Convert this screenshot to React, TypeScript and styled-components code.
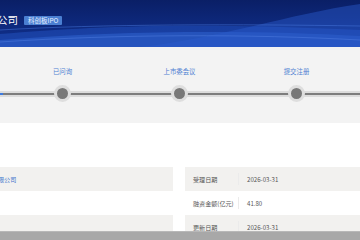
import React from "react";
import styled, { createGlobalStyle } from "styled-components";

const STEP_WIDTH = 117;
const ROW_HEIGHT = 24;

const GlobalStyle = createGlobalStyle`
  html, body {
    margin: 0;
    padding: 0;
    background: #fff;
    overflow: hidden;
  }
  body {
    width: 360px;
    height: 240px;
    font-family: "Noto Sans CJK SC", "Noto Sans", sans-serif;
  }
`;

const Page = styled.div`
  display: flex;
  flex-direction: column;
  width: 360px;
`;

const Header = styled.div`
  position: relative;
  height: 47px;
  overflow: hidden;
  background: linear-gradient(180deg, #0a1f66 0%, #0e2a80 60%, #12338f 100%);
`;

const Waves = styled.svg`
  position: absolute;
  left: 0;
  top: 0;
  width: 360px;
  height: 47px;
`;

const TitleRow = styled.div`
  position: relative;
  display: flex;
  align-items: center;
  gap: 6px;
  padding-top: 13px;
  margin-left: -3px;
`;

const Title = styled.span`
  color: #fff;
  font-size: 10.5px;
  line-height: 14px;
`;

const Badge = styled.span`
  background: #4a7fd2;
  color: #e8f0ff;
  font-size: 6.5px;
  line-height: 9px;
  padding: 0 4px;
  border-radius: 1px;
`;

const Progress = styled.div`
  position: relative;
  height: 76px;
  background: #f3f3f3;
  overflow: hidden;
`;

const Track = styled.div`
  position: absolute;
  left: 0;
  right: 0;
  top: 44px;
  height: 6px;
  background: #dcdcdc;
`;

const TrackLine = styled.div<{ done?: boolean }>`
  position: absolute;
  left: 0;
  top: 2px;
  height: 2px;
  width: ${(p) => (p.done ? "3px" : "100%")};
  background: ${(p) => (p.done ? "#3d7be0" : "#7d7d7d")};
`;

const Steps = styled.div`
  position: relative;
  display: flex;
  margin-left: -113px;
`;

const Step = styled.div`
  flex: 0 0 ${STEP_WIDTH}px;
  display: flex;
  flex-direction: column;
  align-items: center;
`;

const StepLabel = styled.span`
  margin-top: 20px;
  height: 10px;
  font-size: 6.4px;
  line-height: 10px;
  color: #4d80d2;
  white-space: nowrap;
`;

const Dot = styled.span`
  margin-top: 8px;
  width: 11px;
  height: 11px;
  border-radius: 50%;
  background: #787878;
  border: 3px solid #dedede;
`;

const Spacer = styled.div`
  height: 44px;
`;

const Table = styled.div`
  display: flex;
  gap: 12px;
`;

const Column = styled.div<{ width?: number }>`
  display: flex;
  flex-direction: column;
  ${(p) => (p.width ? `flex: 0 0 ${p.width}px;` : "flex: 1;")}
`;

const Row = styled.div<{ shaded: boolean }>`
  display: flex;
  align-items: center;
  height: ${ROW_HEIGHT}px;
  background: ${(p) => (p.shaded ? "#f2f1ef" : "#fff")};
`;

const Label = styled.span`
  flex: 0 0 45px;
  padding-left: 8px;
  font-size: 6.1px;
  color: #555;
  white-space: nowrap;
`;

const Divider = styled.span`
  width: 1px;
  height: 12px;
  background: #ebebeb;
`;

const Value = styled.span<{ link?: boolean }>`
  padding-left: ${(p) => (p.link ? "0" : "8px")};
  margin-left: ${(p) => (p.link ? "-2px" : "0")};
  font-size: 6.1px;
  color: ${(p) => (p.link ? "#3f74cc" : "#555")};
  white-space: nowrap;
`;

const BottomBar = styled.div`
  position: fixed;
  left: 0;
  right: 0;
  bottom: 0;
  height: 8px;
  background: #a8a8a8;
  border-top: 1px solid #b8b8b8;
`;

// first and last steps sit outside the visible strip
const steps = ["", "已问询", "上市委会议", "提交注册", ""];

const leftRows = ["限公司", "", ""];
const rightRows = [
  { label: "受理日期", value: "2026-03-31" },
  { label: "融资金额(亿元)", value: "41.80" },
  { label: "更新日期", value: "2026-03-31" },
];

const App: React.FC = () => {
  return (
    <Page>
      <GlobalStyle />
      <Header>
        <Waves viewBox="0 0 360 47" preserveAspectRatio="none">
          <path
            d="M0 34 C 90 26, 200 22, 360 30 L360 47 L0 47 Z"
            fill="#1f4cb8"
            opacity="0.6"
          />
          <path
            d="M0 40 C 120 30, 260 30, 360 36 L360 47 L0 47 Z"
            fill="#2f62cf"
            opacity="0.55"
          />
          <path
            d="M140 47 C 220 38, 290 14, 360 4 L360 47 Z"
            fill="#2b5ccc"
            opacity="0.45"
          />
          <path
            d="M0 30 C 100 24, 240 24, 360 26"
            stroke="#4a7ae0"
            strokeWidth="0.8"
            fill="none"
            opacity="0.6"
          />
          <path
            d="M0 42 C 120 34, 250 34, 360 40"
            stroke="#5a88e8"
            strokeWidth="0.8"
            fill="none"
            opacity="0.5"
          />
        </Waves>
        <TitleRow>
          <Title>公司</Title>
          <Badge>科创板IPO</Badge>
        </TitleRow>
      </Header>

      <Progress>
        <Track>
          <TrackLine />
          <TrackLine done />
        </Track>
        <Steps>
          {steps.map((s, i) => (
            <Step key={i}>
              <StepLabel>{s}</StepLabel>
              <Dot />
            </Step>
          ))}
        </Steps>
      </Progress>

      <Spacer />

      <Table>
        <Column width={173}>
          {leftRows.map((v, i) => (
            <Row key={i} shaded={i % 2 === 0}>
              {v && <Value link>{v}</Value>}
            </Row>
          ))}
        </Column>
        <Column>
          {rightRows.map((r, i) => (
            <Row key={r.label + i} shaded={i % 2 === 0}>
              <Label>{r.label}</Label>
              <Divider />
              <Value>{r.value}</Value>
            </Row>
          ))}
        </Column>
      </Table>
      <BottomBar />
    </Page>
  );
};

export default App;
